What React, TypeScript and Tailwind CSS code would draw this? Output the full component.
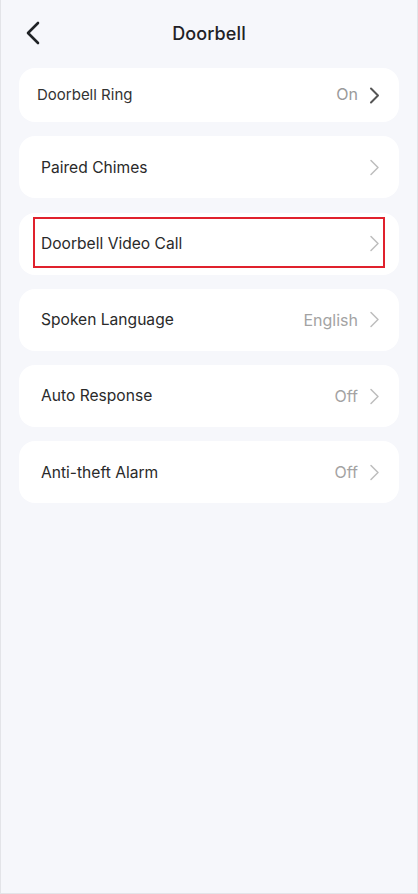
import React from 'react';

type Row = {
  label: string;
  value?: string;
  highlight?: boolean;
};

const rows: Row[] = [
  { label: 'Paired Chimes' },
  { label: 'Doorbell Video Call', highlight: true },
  { label: 'Spoken Language', value: 'English' },
  { label: 'Auto Response', value: 'Off' },
  { label: 'Anti-theft Alarm', value: 'Off' },
];

const font = { fontFamily: 'Inter, "Noto Sans", sans-serif' };

function Chevron({ dark }: { dark?: boolean }) {
  return (
    <svg width="11" height="17" viewBox="0 0 11 17" fill="none">
      <polyline
        points="2,1.5 9,8.5 2,15.5"
        stroke={dark ? '#555555' : '#bdbdbd'}
        strokeWidth={dark ? 2 : 1.5}
        strokeLinecap="round"
        strokeLinejoin="round"
      />
    </svg>
  );
}

export default function App() {
  return (
    <div
      className="w-[418px] h-[894px] bg-[#f6f7fb] border-l border-r border-b border-[#e3e4e8] flex flex-col"
      style={font}
    >
      {/* Header */}
      <div className="relative h-[66px] flex items-center justify-center shrink-0">
        <button className="absolute left-[24px] top-[21px] p-0">
          <svg width="16" height="24" viewBox="0 0 16 24" fill="none">
            <polyline
              points="13,2 3,12 13,22"
              stroke="#1f2226"
              strokeWidth="2.6"
              strokeLinecap="round"
              strokeLinejoin="round"
            />
          </svg>
        </button>
        <h1 className="text-[18px] font-medium text-[#1f2226] tracking-[0.1px]">Doorbell</h1>
      </div>

      {/* List */}
      <div className="flex flex-col gap-[14.3px] px-[18px] pt-[2px]">
        <div className="h-[54px] bg-white rounded-[16px] flex items-center justify-between pl-[18px] pr-[19px]">
          <span className="text-[15px] text-[#333333]">Doorbell Ring</span>
          <div className="flex items-center gap-[11px]">
            <span className="text-[16px] text-[#9a9a9a] -mt-[3px]">On</span>
            <Chevron dark />
          </div>
        </div>

        {rows.map((row) => (
          <div
            key={row.label}
            className="relative h-[62px] bg-white rounded-[16px] flex items-center justify-between pl-[22px] pr-[19px]"
          >
            <span className="text-[15.6px] text-[#2a2a2a]">{row.label}</span>
            <div className="flex items-center gap-[11px]">
              {row.value && <span className="text-[16px] text-[#a3a3a3]">{row.value}</span>}
              <Chevron />
            </div>
            {row.highlight && (
              <div className="absolute left-[14px] right-[14px] top-[4px] bottom-[7px] border-2 border-[#e0212d] pointer-events-none" />
            )}
          </div>
        ))}
      </div>
    </div>
  );
}
